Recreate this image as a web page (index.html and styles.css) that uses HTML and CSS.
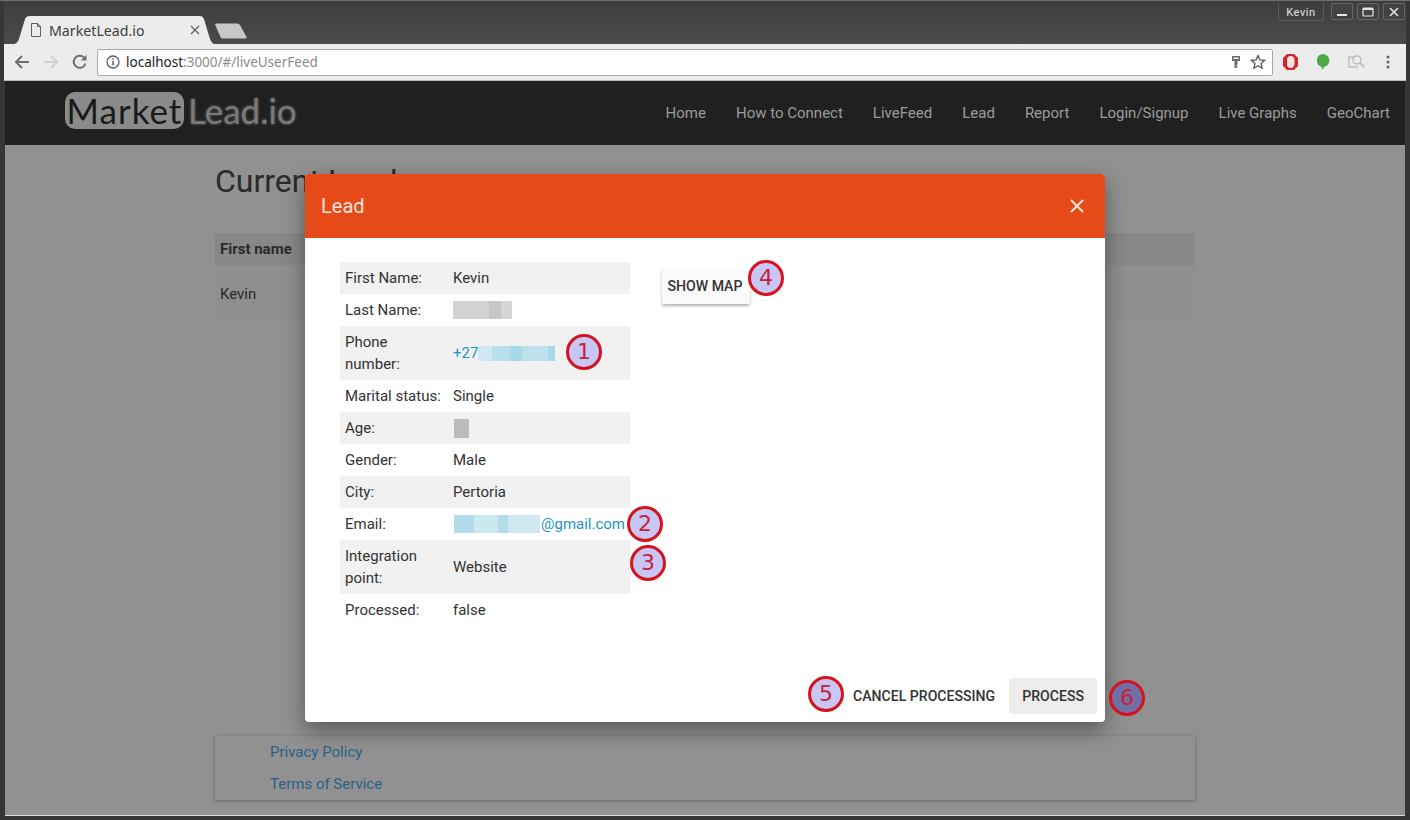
FILE: index.html
```html
<!DOCTYPE html>
<html lang="en">
<head>
    <meta charset="UTF-8">
    <title>MarketLead.io</title>
    <link rel="stylesheet" href="styles.css">
</head>
<body>
<div class="window">
    <div class="titlebar">
        <div class="tabs">
            <div class="tab">
                <svg class="tab-shape" width="204" height="30" viewBox="0 0 204 30"><path d="M0 30 C4 29 6 27 7 24 L13 4 C14 2 15 1 18 1 L188 1 C190 1 191 2 192 4 L198 24 C199 27 201 29 204 30 Z" fill="#ececec"/></svg>
                <svg class="tab-doc" width="12" height="14" viewBox="0 0 12 14"><path d="M1.5 .5 H7.5 L10.5 3.5 V13.5 H1.5 Z M7.5 .5 V3.5 H10.5" fill="none" stroke="#5e5e5e"/></svg>
                <span class="tab-title">MarketLead.io</span>
                <svg class="tab-close" width="10" height="10" viewBox="0 0 10 10"><path d="M1 1 L9 9 M9 1 L1 9" stroke="#666" stroke-width="1.4"/></svg>
            </div>
            <svg class="new-tab" width="34" height="16" viewBox="0 0 34 16"><path d="M1 1.5 Q1 .5 2 .5 H23 Q25 .5 26 2 L32.5 14 Q33 15.5 31 15.5 H9 Q7 15.5 6.5 14 Z" fill="#c8c8c8"/></svg>
        </div>
        <div class="window-controls">
            <span class="user-chip">Kevin</span>
            <span class="win-btn"><svg width="12" height="12" viewBox="0 0 12 12"><rect x="1" y="8" width="10" height="2" fill="#e4e4e4"/></svg></span>
            <span class="win-btn"><svg width="12" height="12" viewBox="0 0 12 12"><rect x="1" y="2" width="10" height="8" rx="1" fill="none" stroke="#e4e4e4" stroke-width="1.2"/><rect x="1" y="2" width="10" height="2" fill="#e4e4e4"/></svg></span>
            <span class="win-btn"><svg width="12" height="12" viewBox="0 0 12 12"><path d="M2 2 L10 10 M10 2 L2 10" stroke="#e4e4e4" stroke-width="1.6"/></svg></span>
        </div>
    </div>

    <div class="toolbar">
        <svg class="nav-icon" width="16" height="14" viewBox="0 0 16 14"><path d="M15 7 H2 M8 1 L2 7 L8 13" fill="none" stroke="#6e6e6e" stroke-width="2"/></svg>
        <svg class="nav-icon" width="16" height="14" viewBox="0 0 16 14"><path d="M1 7 H14 M8 1 L14 7 L8 13" fill="none" stroke="#d0d0d0" stroke-width="2"/></svg>
        <svg class="nav-icon" width="16" height="16" viewBox="0 0 16 16"><path d="M13.5 9.5 A6 6 0 1 1 12 3.6" fill="none" stroke="#6e6e6e" stroke-width="2"/><path d="M14.5 .8 V6.5 H8.8 Z" fill="#6e6e6e"/></svg>
        <div class="omnibox">
            <svg width="14" height="14" viewBox="0 0 14 14"><circle cx="7" cy="7" r="6" fill="none" stroke="#5f5f5f" stroke-width="1.3"/><rect x="6.3" y="6" width="1.5" height="4.5" fill="#5f5f5f"/><rect x="6.3" y="3.4" width="1.5" height="1.5" fill="#5f5f5f"/></svg>
            <span class="url"><span class="url-host">localhost</span>:3000/#/liveUserFeed</span>
            <svg class="omni-key" width="10" height="14" viewBox="0 0 10 14"><path fill-rule="evenodd" d="M1 1 H9 V6 H6.5 V10 H5.5 V11 H6.5 V12 L5 13 H3.5 V6 H1 Z M2.5 2.5 V4 H7.5 V2.5 Z" fill="#6a6a6a"/></svg>
            <svg width="16" height="16" viewBox="0 0 16 16"><path d="M8 1.6 L9.9 6 L14.6 6.4 L11 9.5 L12.1 14.2 L8 11.7 L3.9 14.2 L5 9.5 L1.4 6.4 L6.1 6 Z" fill="none" stroke="#555" stroke-width="1.3"/></svg>
        </div>
        <div class="extensions">
            <svg width="17" height="18" viewBox="0 0 17 18"><path d="M5 1 H12 L16 5 V13 L12 17 H5 L1 13 V5 Z" fill="#d3262b"/><path d="M5 7 Q5 3 8.5 3 Q12.5 3 12.5 7 V11 Q12 15 8.5 15 Q5 15 5 11 Z" fill="#f4e4e4"/></svg>
            <svg width="14" height="18" viewBox="0 0 14 18"><path d="M7 1 A6.5 6.5 0 0 1 8 13.9 L6.5 17 L5.5 13.7 A6.5 6.5 0 0 1 7 1 Z" fill="#4caa46"/></svg>
            <svg width="18" height="16" viewBox="0 0 18 16"><path d="M10 3 H2 V13 H11" fill="none" stroke="#bdbdbd" stroke-width="1.5"/><circle cx="10" cy="6" r="4" fill="#ececec" stroke="#bdbdbd" stroke-width="1.5"/><path d="M13 9 L17 13" stroke="#bdbdbd" stroke-width="2"/></svg>
            <svg class="menu-dots" width="4" height="14" viewBox="0 0 4 14"><circle cx="2" cy="2" r="1.5" fill="#666"/><circle cx="2" cy="7" r="1.5" fill="#666"/><circle cx="2" cy="12" r="1.5" fill="#666"/></svg>
        </div>
    </div>

    <nav class="navbar">
        <div class="logo"><span class="logo-box">Market</span><span class="logo-rest">Lead.io</span></div>
        <div class="nav-links">
            <a>Home</a>
            <a>How to Connect</a>
            <a>LiveFeed</a>
            <a>Lead</a>
            <a>Report</a>
            <a>Login/Signup</a>
            <a>Live Graphs</a>
            <a>GeoChart</a>
        </div>
    </nav>

    <main class="page">
        <div class="content">
            <h1>Current Leads</h1>
            <div class="leads-table">
                <div class="leads-head">First name</div>
                <div class="leads-row">Kevin</div>
            </div>
            <footer class="site-footer">
                <a>Privacy Policy</a>
                <a>Terms of Service</a>
            </footer>
        </div>

        <div class="backdrop"></div>

        <div class="dialog">
            <div class="dialog-head">
                <span>Lead</span>
                <svg width="14" height="14" viewBox="0 0 14 14"><path d="M1 1 L13 13 M13 1 L1 13" stroke="#fde6dd" stroke-width="2"/></svg>
            </div>
            <div class="dialog-body">
                <div class="details">
                    <div class="row"><div class="label">First Name:</div><div class="value">Kevin</div></div>
                    <div class="row"><div class="label">Last Name:</div><div class="value"><span class="blur blur-grey"></span></div></div>
                    <div class="row"><div class="label">Phone number:</div><div class="value link">+27<span class="blur blur-phone"></span></div></div>
                    <div class="row"><div class="label">Marital status:</div><div class="value">Single</div></div>
                    <div class="row"><div class="label">Age:</div><div class="value"><span class="blur blur-age"></span></div></div>
                    <div class="row"><div class="label">Gender:</div><div class="value">Male</div></div>
                    <div class="row"><div class="label">City:</div><div class="value">Pertoria</div></div>
                    <div class="row"><div class="label">Email:</div><div class="value link"><span class="blur blur-email"></span>@gmail.com</div></div>
                    <div class="row"><div class="label">Integration point:</div><div class="value">Website</div></div>
                    <div class="row"><div class="label">Processed:</div><div class="value">false</div></div>
                </div>
                <div class="map-col">
                    <button class="btn btn-raised">Show map</button>
                </div>
            </div>
            <div class="dialog-actions">
                <button class="btn">Cancel processing</button>
                <button class="btn btn-grey">Process</button>
            </div>
        </div>

        <span class="marker m1">1</span>
        <span class="marker m2">2</span>
        <span class="marker m3">3</span>
        <span class="marker m4">4</span>
        <span class="marker m5">5</span>
        <span class="marker m6">6</span>
    </main>
</div>
</body>
</html>
```

FILE: styles.css
```css
* {
    box-sizing: border-box;
}
html, body {
    margin: 0;
    padding: 0;
    height: 100%;
    overflow: hidden;
}
body {
    font-family: Roboto, "Liberation Sans", sans-serif;
    background: #3a3a3a;
}
.window {
    width: 1410px;
    height: 820px;
    display: flex;
    flex-direction: column;
    padding: 0 5px 4px;
    background: #363636;
    border-top: 1px solid #707070;
}

/* browser chrome */
.titlebar {
    height: 43px;
    margin: 0 -1px;
    display: flex;
    justify-content: space-between;
    background: linear-gradient(#3e3e3e, #4a4a4a);
}
.tabs {
    display: flex;
    align-items: flex-start;
    padding: 14px 0 0 8px;
}
.tab {
    position: relative;
    width: 204px;
    height: 30px;
    display: flex;
    align-items: center;
    padding: 0 16px 0 18px;
}
.tab-shape {
    position: absolute;
    left: 0;
    top: 0;
}
.tab-doc, .tab-title, .tab-close {
    position: relative;
}
.tab-title {
    flex: 1;
    margin-left: 7px;
    font-family: "Noto Sans", sans-serif;
    font-size: 14.2px;
    color: #3c3c3c;
}
.new-tab {
    margin: 8px 0 0 -2px;
}
.window-controls {
    display: flex;
    align-items: flex-start;
    gap: 4px;
    padding: 2px 1px 0 0;
}
.user-chip {
    width: 46px;
    height: 18px;
    margin-right: 3px;
    border: 1px solid #5c5c5c;
    border-top: 0;
    border-radius: 0 0 4px 4px;
    font-size: 11px;
    line-height: 19px;
    letter-spacing: .6px;
    text-align: center;
    color: #e2e2e2;
}
.win-btn {
    width: 22px;
    height: 17px;
    display: flex;
    align-items: center;
    justify-content: center;
    border: 1px solid #666;
    border-radius: 2px;
    background: #424242;
}
.toolbar {
    height: 37px;
    margin: 0 -1px;
    display: flex;
    align-items: center;
    padding-left: 10px;
    background: #ececec;
    border-bottom: 1px solid #bdbdbd;
}
.nav-icon {
    margin-right: 13px;
}
.omnibox {
    width: 1176px;
    height: 27px;
    margin-left: -4px;
    display: flex;
    align-items: center;
    padding: 0 6px 0 8px;
    background: #fff;
    border: 1px solid #a9a9a9;
    border-radius: 2px;
}
.url {
    flex: 1;
    margin-left: 6px;
    font-family: "Noto Sans", sans-serif;
    font-size: 13.5px;
    color: #8a8a8a;
}
.url-host {
    color: #222;
}
.omni-key {
    margin-right: 9px;
}
.extensions {
    flex: 1;
    display: flex;
    align-items: center;
    gap: 17px;
    padding-left: 9px;
}
.menu-dots {
    margin-left: 4px;
}

/* app navbar */
.navbar {
    height: 64px;
    flex-shrink: 0;
    display: flex;
    justify-content: space-between;
    align-items: center;
    padding: 0 15px 0 60px;
    background: #202020;
}
.logo {
    display: flex;
    align-items: center;
    margin-top: -6px;
    font-family: Lato, sans-serif;
    font-size: 35px;
}
.logo-box {
    width: 119px;
    height: 37px;
    line-height: 36px;
    letter-spacing: 1px;
    text-align: center;
    border-radius: 10px;
    background: #8a8a8a;
    color: #1a1a1a;
}
.logo-rest {
    margin-left: 4px;
    color: #7a7a7a;
    text-shadow: 0 0 3px #666;
}
.nav-links {
    display: flex;
    gap: 30px;
    font-size: 15px;
    color: #9c9c9c;
}

/* page behind the dialog */
.page {
    position: relative;
    flex: 1;
    background: #fff;
    border-bottom: 1px solid #dcdcdc;
}
.content {
    width: 980px;
    height: 100%;
    margin: 0 auto;
    display: flex;
    flex-direction: column;
}
.content h1 {
    margin: 13px 0 0;
    font-size: 32px;
    font-weight: 400;
    color: #4a4a4a;
    line-height: 46px;
}
.leads-table {
    margin-top: 29px;
    font-size: 15px;
    color: #4a4a4a;
}
.leads-head {
    height: 32px;
    padding: 0 5px;
    line-height: 32px;
    font-weight: 700;
    background: #efefef;
}
.leads-row {
    height: 56px;
    padding: 0 5px;
    line-height: 58px;
    background: #fbfbfb;
}
.site-footer {
    margin-top: 415px;
    height: 64px;
    display: flex;
    flex-direction: column;
    padding-left: 55px;
    background: #fff;
    box-shadow: 0 1px 4px rgba(0, 0, 0, .3);
    font-size: 15px;
    line-height: 32px;
    color: #4aaaf0;
}
.backdrop {
    position: absolute;
    inset: 0;
    background: rgba(0, 0, 0, .43);
}

/* dialog */
.dialog {
    position: absolute;
    left: 300px;
    top: 29px;
    width: 800px;
    height: 548px;
    display: flex;
    flex-direction: column;
    border-radius: 4px;
    overflow: hidden;
    background: #fff;
    box-shadow: 0 8px 22px rgba(0, 0, 0, .4);
}
.dialog-head {
    height: 64px;
    display: flex;
    justify-content: space-between;
    align-items: center;
    padding: 0 21px 0 16px;
    background: #e64a19;
    color: #fbe3da;
    font-size: 20px;
}
.dialog-body {
    flex: 1;
    display: flex;
    padding: 24px 0 0 35px;
}
.details {
    width: 290px;
    font-size: 15px;
    line-height: 22px;
    color: #333;
}
.row {
    display: flex;
    align-items: center;
    padding: 5px;
}
.row:nth-child(odd) {
    background: #f1f1f1;
}
.label {
    width: 108px;
    flex-shrink: 0;
    padding-right: 10px;
}
.value {
    white-space: nowrap;
    display: flex;
    align-items: center;
}
.link {
    color: #1e96bd;
}
.blur {
    display: inline-block;
    height: 18px;
}
.blur-grey {
    width: 59px;
    background: linear-gradient(90deg, #d2d2d2 0 36px, #c6c6c6 36px 48px, #d6d6d6 48px);
}
.blur-phone {
    width: 77px;
    height: 15px;
    background: linear-gradient(90deg, #cfe8f2 0 14px, #b9dfec 14px 32px, #a9d8e8 32px 44px, #bde0ed 44px 70px, #a9d8e8 70px);
}
.blur-age {
    width: 15px;
    height: 19px;
    margin-left: 1px;
    background: #bcbcbc;
}
.blur-email {
    width: 86px;
    margin-left: 1px;
    margin-right: 1px;
    background: linear-gradient(90deg, #b3dcea 0 20px, #cbe7f0 20px 44px, #b5dde9 44px 54px, #cfe8f1 54px);
}
.map-col {
    padding: 6px 0 0 32px;
}
.btn {
    font-family: Roboto, sans-serif;
    font-size: 14.1px;
    font-weight: 500;
    text-transform: uppercase;
    color: #333;
    height: 36px;
    padding: 0 13px;
    border: 0;
    border-radius: 2px;
    background: transparent;
}
.btn-raised {
    width: 88px;
    padding: 0 2px 0 0;
    background: #fafafa;
    box-shadow: 0 2px 3px rgba(0, 0, 0, .3);
}
.btn-grey {
    background: #ededed;
}
.dialog-actions {
    display: flex;
    justify-content: flex-end;
    padding: 0 8px 8px 0;
    gap: 1px;
}

/* numbered callouts */
.marker {
    position: absolute;
    width: 36px;
    height: 36px;
    border: 3px solid #d6121c;
    border-radius: 50%;
    background: #c8c6f4;
    color: #c8213a;
    font-family: "DejaVu Sans", sans-serif;
    font-size: 22px;
    line-height: 29px;
    text-align: center;
}
.m1 { left: 561px; top: 189px; }
.m2 { left: 622px; top: 361px; }
.m3 { left: 625px; top: 400px; }
.m4 { left: 743px; top: 115px; }
.m5 { left: 803px; top: 531px; }
.m6 { left: 1104px; top: 535px; background: #7070a6; }
```
